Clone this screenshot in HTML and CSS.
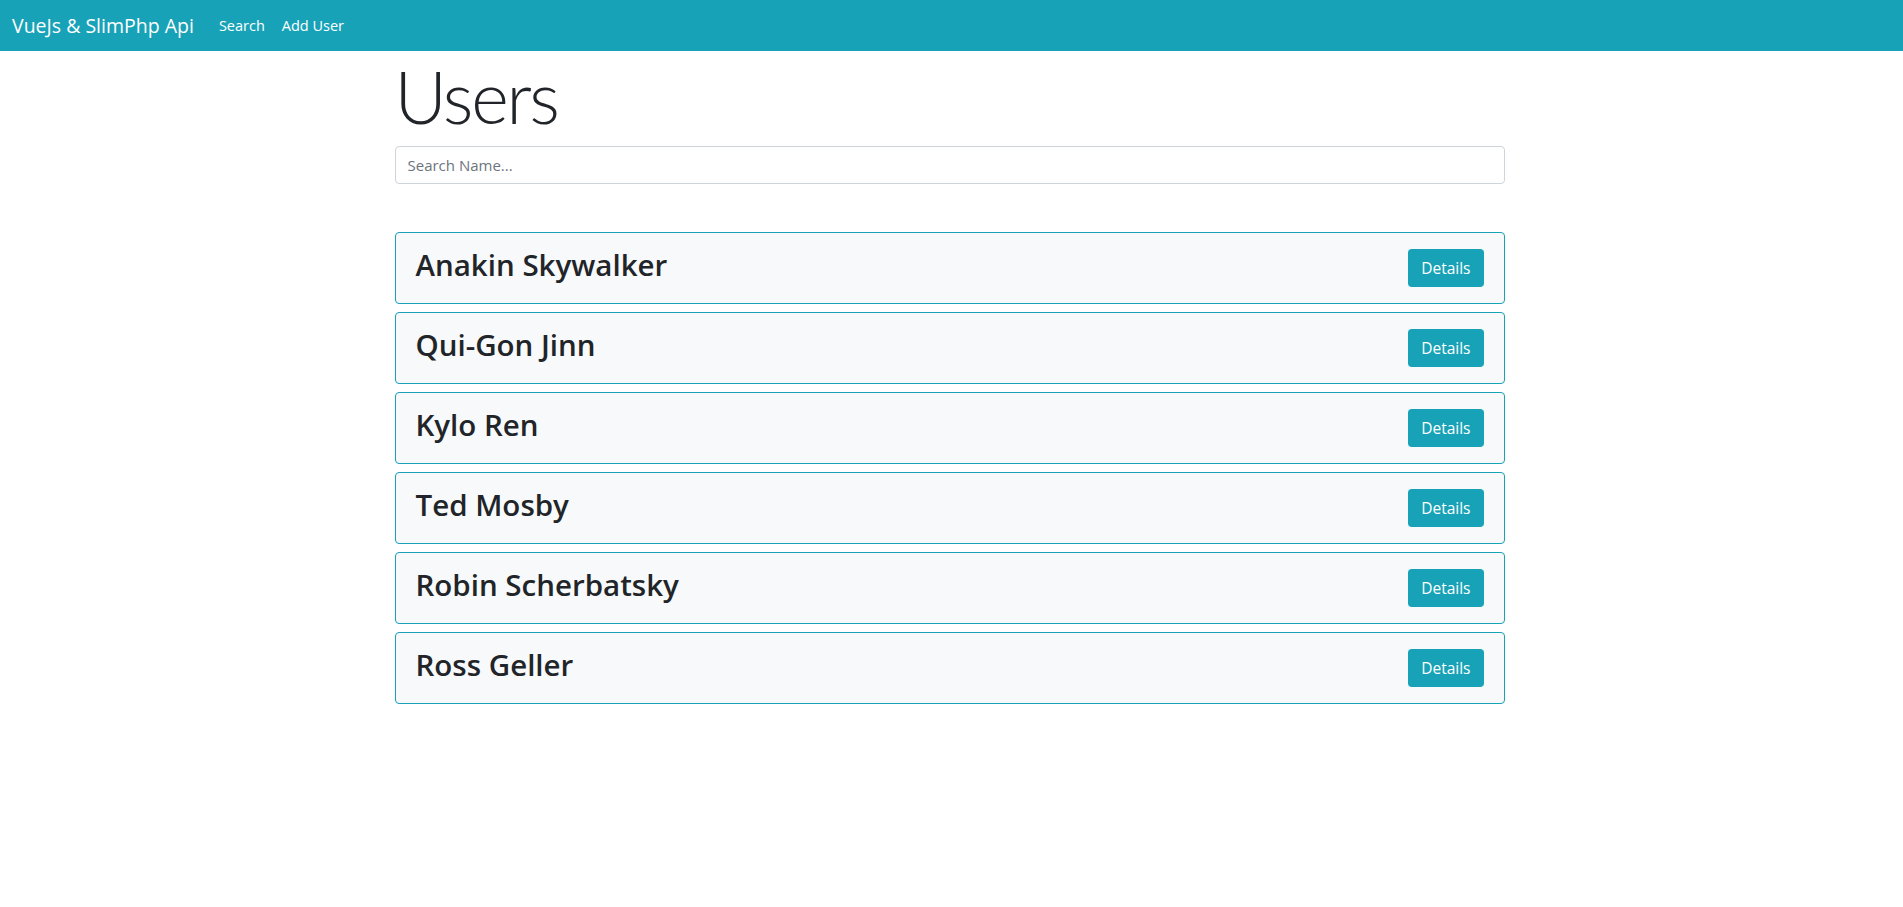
FILE: index.html
```html
<!DOCTYPE html>
<html lang="en">
<head>
<meta charset="utf-8">
<title>VueJs &amp; SlimPhp Api</title>
<link rel="stylesheet" href="styles.css">
</head>
<body>
<nav class="navbar">
  <a class="brand" href="#">VueJs &amp; SlimPhp Api</a>
  <a class="nav-link" href="#">Search</a>
  <a class="nav-link" href="#">Add User</a>
</nav>
<main class="container">
  <h1 class="title">Users</h1>
  <input class="search" type="text" placeholder="Search Name...">
  <ul class="users">
    <li class="user-card"><h2 class="user-name">Anakin Skywalker</h2><a class="btn" href="#">Details</a></li>
    <li class="user-card"><h2 class="user-name">Qui-Gon Jinn</h2><a class="btn" href="#">Details</a></li>
    <li class="user-card"><h2 class="user-name">Kylo Ren</h2><a class="btn" href="#">Details</a></li>
    <li class="user-card"><h2 class="user-name">Ted Mosby</h2><a class="btn" href="#">Details</a></li>
    <li class="user-card"><h2 class="user-name">Robin Scherbatsky</h2><a class="btn" href="#">Details</a></li>
    <li class="user-card"><h2 class="user-name">Ross Geller</h2><a class="btn" href="#">Details</a></li>
  </ul>
</main>
</body>
</html>
```
FILE: styles.css
```css
* { box-sizing: border-box; }
body {
  margin: 0;
  font-family: "Open Sans", "Noto Sans", sans-serif;
  color: #212529;
  background: #fff;
}
a { text-decoration: none; }
.navbar {
  height: 51px;
  background: #17a2b8;
  display: flex;
  align-items: center;
  padding: 0 12px;
}
.brand {
  color: #fff;
  font-size: 19.5px;
  margin-right: 17px;
}
.nav-link {
  color: #fff;
  font-size: 14.5px;
  padding: 0 8px;
}
.nav-link + .nav-link { padding-left: 9px; }
.container {
  width: 1110px;
  margin-left: calc(50% - 557px);
}
.title {
  font-family: Lato, "Open Sans", sans-serif;
  font-size: 72px;
  font-weight: 300;
  line-height: 86px;
  letter-spacing: -2.2px;
  margin: 0 0 9px;
  padding-top: 2px;
}
.search {
  display: block;
  width: 100%;
  height: 38px;
  margin-top: -2px;
  padding: 6px 12px;
  font-family: inherit;
  font-size: 15px;
  color: #495057;
  border: 1px solid #ced4da;
  border-radius: 4px;
  outline: none;
}
.search::placeholder { color: #6c757d; }
.users {
  list-style: none;
  margin: 48px 0 0;
  padding: 0;
}
.user-card {
  display: flex;
  align-items: center;
  justify-content: space-between;
  height: 72px;
  margin-bottom: 8px;
  padding: 0 20px;
  background: #f8f9fa;
  border: 1px solid #17a2b8;
  border-radius: 4px;
}
.user-name {
  margin: 0;
  padding-bottom: 6px;
  font-size: 29.5px;
  font-weight: 600;
  line-height: 38px;
}
.btn {
  display: inline-block;
  height: 38px;
  padding: 0 13px;
  line-height: 38px;
  font-size: 15.5px;
  color: #fff;
  background: #17a2b8;
  border-radius: 4px;
}
```
